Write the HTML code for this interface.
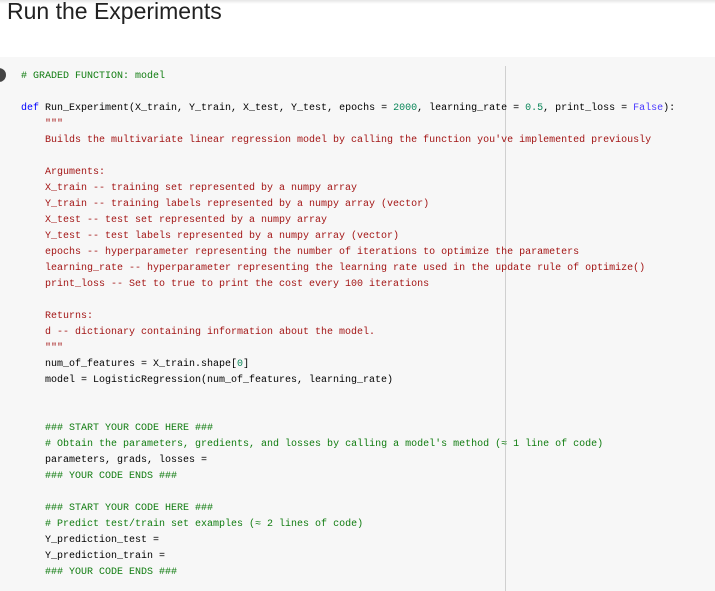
<!DOCTYPE html>
<html><head><meta charset="utf-8"><style>
html,body{margin:0;padding:0;width:715px;height:591px;overflow:hidden;background:#fff;font-family:"Liberation Sans",sans-serif}
.top{position:absolute;left:0;top:0;width:715px;height:4px;background:linear-gradient(#e6e6e6,#fff)}
h1{position:absolute;left:7px;top:-2px;margin:0;font-weight:normal;font-size:23px;color:#212121}
.cell{position:absolute;left:0;top:57px;width:715px;height:534px;background:#f7f7f7}
.dot{position:absolute;left:-8px;top:68px;width:14px;height:14px;border-radius:50%;background:#444}
.rule{position:absolute;left:505px;top:66px;width:1px;height:525px;background:#d0d0d0}
pre{position:absolute;left:21px;top:69px;margin:0;font-family:"Liberation Mono",monospace;font-size:10px;line-height:16px;color:#000}
.c{color:#107c10}.s{color:#a31515}.k{color:#0000ff}.n{color:#098658}.f{color:#4a3aff}
</style></head><body>
<div class="top"></div>
<h1>Run the Experiments</h1>
<div class="cell"></div>
<div class="dot"></div>
<div class="rule"></div>
<pre><span class="c"># GRADED FUNCTION: model</span>

<span class="k">def</span> Run_Experiment(X_train, Y_train, X_test, Y_test, epochs = <span class="n">2000</span>, learning_rate = <span class="n">0.5</span>, print_loss = <span class="f">False</span>):
<span class="s">    """
    Builds the multivariate linear regression model by calling the function you've implemented previously

    Arguments:
    X_train -- training set represented by a numpy array
    Y_train -- training labels represented by a numpy array (vector)
    X_test -- test set represented by a numpy array
    Y_test -- test labels represented by a numpy array (vector)
    epochs -- hyperparameter representing the number of iterations to optimize the parameters
    learning_rate -- hyperparameter representing the learning rate used in the update rule of optimize()
    print_loss -- Set to true to print the cost every 100 iterations

    Returns:
    d -- dictionary containing information about the model.
    """</span>
    num_of_features = X_train.shape[<span class="n">0</span>]
    model = LogisticRegression(num_of_features, learning_rate)


    <span class="c">### START YOUR CODE HERE ###</span>
    <span class="c"># Obtain the parameters, gredients, and losses by calling a model's method (≈ 1 line of code)</span>
    parameters, grads, losses =
    <span class="c">### YOUR CODE ENDS ###</span>

    <span class="c">### START YOUR CODE HERE ###</span>
    <span class="c"># Predict test/train set examples (≈ 2 lines of code)</span>
    Y_prediction_test =
    Y_prediction_train =
    <span class="c">### YOUR CODE ENDS ###</span></pre>
</body></html>
